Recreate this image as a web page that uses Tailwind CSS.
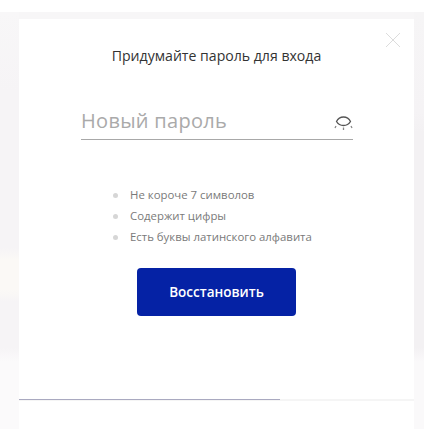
<!DOCTYPE html>
<html lang="ru">
<head>
    <meta charset="UTF-8">
    <title>Восстановление пароля</title>
    <script src="https://cdn.jsdelivr.net/npm/@tailwindcss/browser@4"></script>
</head>
<body class="w-[424px] h-[429px] overflow-hidden bg-white font-['Open_Sans',sans-serif]">
    <div class="flex h-[417px] mt-[12px]">
        <!-- blurred page behind the modal -->
        <div class="w-[19px] bg-[linear-gradient(#f8f7f8_0,#f6f4f6_80px,#f6f4f6_236px,#fbf9f6_248px,#fbf9f6_278px,#f6f4f6_290px,#f6f4f6_336px,#fbfafb_350px)]"></div>

        <div class="w-[395px] pt-[7px] bg-[#f7f6f7]">
            <div class="relative h-[410px] bg-white">
                <button class="absolute right-[13px] top-[13px] w-[16px] h-[16px]">
                    <svg viewBox="0 0 16 16" class="w-[16px] h-[16px]" fill="none" stroke="#dcdcdc" stroke-width="1"><path d="M1 1l14 14M15 1L1 15"/></svg>
                </button>

                <h2 class="pt-[27px] text-center text-[14.1px] leading-[20px] text-[#333333]">Придумайте пароль для входа</h2>

                <div class="mt-[37px] mx-[62px] w-[272px] h-[37px] flex items-start justify-between border-b border-[#a8a8a8]">
                    <span class="pt-[3px] text-[20px] leading-[30px] tracking-[0.3px] text-[#aaaaaa]">Новый пароль</span>
                    <svg viewBox="0 0 20 16" class="mt-[12px] w-[20px] h-[16px]" fill="none" stroke="#555555" stroke-width="1.3">
                        <path d="M3.5 6.5C5 3.5 7.5 2 10.5 2C13.5 2 16 3.5 17.5 6.5C16 9 13.5 10.5 10.5 10.5C7.5 10.5 5 9 3.5 6.5Z"/>
                        <path d="M3 11l-1 2M18 11l1 2M10.5 12.5v2.5" stroke="#888888"/>
                    </svg>
                </div>

                <ul class="mt-[46px] ml-[94px] flex flex-col gap-[3px] text-[11.4px] leading-[18px] text-[#7a7a7a]">
                    <li class="flex items-center gap-[12px]"><span class="w-[5px] h-[5px] rounded-full bg-[#d6d6d6]"></span>Не короче 7 символов</li>
                    <li class="flex items-center gap-[12px]"><span class="w-[5px] h-[5px] rounded-full bg-[#d6d6d6]"></span>Содержит цифры</li>
                    <li class="flex items-center gap-[12px]"><span class="w-[5px] h-[5px] rounded-full bg-[#d6d6d6]"></span>Есть буквы латинского алфавита</li>
                </ul>

                <button class="block mt-[22px] ml-[118px] w-[159px] h-[48px] rounded-[4px] bg-[#0522a5] text-white text-[13.5px] font-semibold">Восстановить</button>

                <div class="mt-[83px] h-[2px] bg-[#f5f5f5]">
                    <div class="w-[261px] h-[1px] bg-[#a9a9c0]"></div>
                </div>
            </div>
        </div>

        <div class="flex-1 bg-[linear-gradient(#f6f5f6_0,#f5f3f5_100px,#f3f1f3_120px,#f3f1f3_336px,#faf9fa_350px)]"></div>
    </div>
</body>
</html>
